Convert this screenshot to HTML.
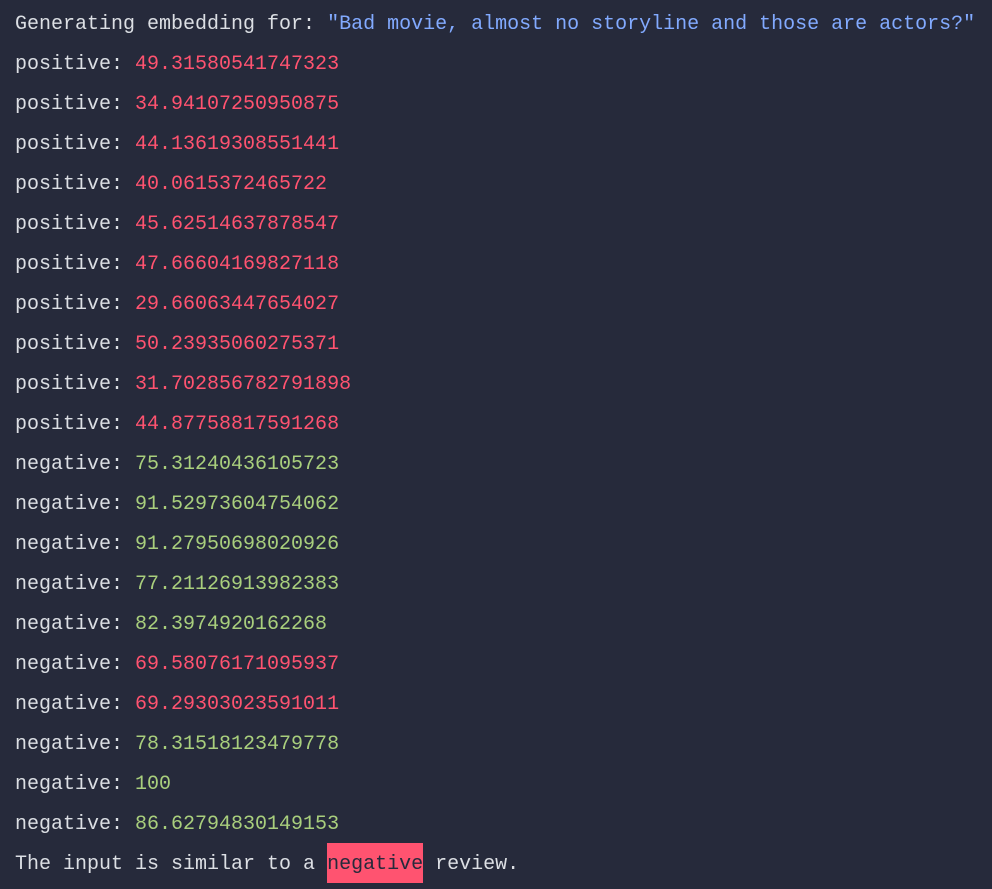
<html><head><style>
body{margin:0;background:#262a3b;width:992px;height:889px;overflow:hidden}
pre{margin:0;padding:5px 0 0 15px;font-family:"Liberation Mono",monospace;font-size:20px;line-height:40px;color:#dcdfe4}
.r{color:#ff5370}.g{color:#a9cf7d}.b{color:#82aaff}
.h{background:#ff5370;color:#262a3b;padding:10px 0 7px 0}
</style></head><body><pre>Generating embedding for: <span class="b">"Bad movie, almost no storyline and those are actors?"</span>
positive: <span class="r">49.31580541747323</span>
positive: <span class="r">34.94107250950875</span>
positive: <span class="r">44.13619308551441</span>
positive: <span class="r">40.0615372465722</span>
positive: <span class="r">45.62514637878547</span>
positive: <span class="r">47.66604169827118</span>
positive: <span class="r">29.66063447654027</span>
positive: <span class="r">50.23935060275371</span>
positive: <span class="r">31.702856782791898</span>
positive: <span class="r">44.87758817591268</span>
negative: <span class="g">75.31240436105723</span>
negative: <span class="g">91.52973604754062</span>
negative: <span class="g">91.27950698020926</span>
negative: <span class="g">77.21126913982383</span>
negative: <span class="g">82.3974920162268</span>
negative: <span class="r">69.58076171095937</span>
negative: <span class="r">69.29303023591011</span>
negative: <span class="g">78.31518123479778</span>
negative: <span class="g">100</span>
negative: <span class="g">86.62794830149153</span>
The input is similar to a <span class="h">negative</span> review.</pre></body></html>
